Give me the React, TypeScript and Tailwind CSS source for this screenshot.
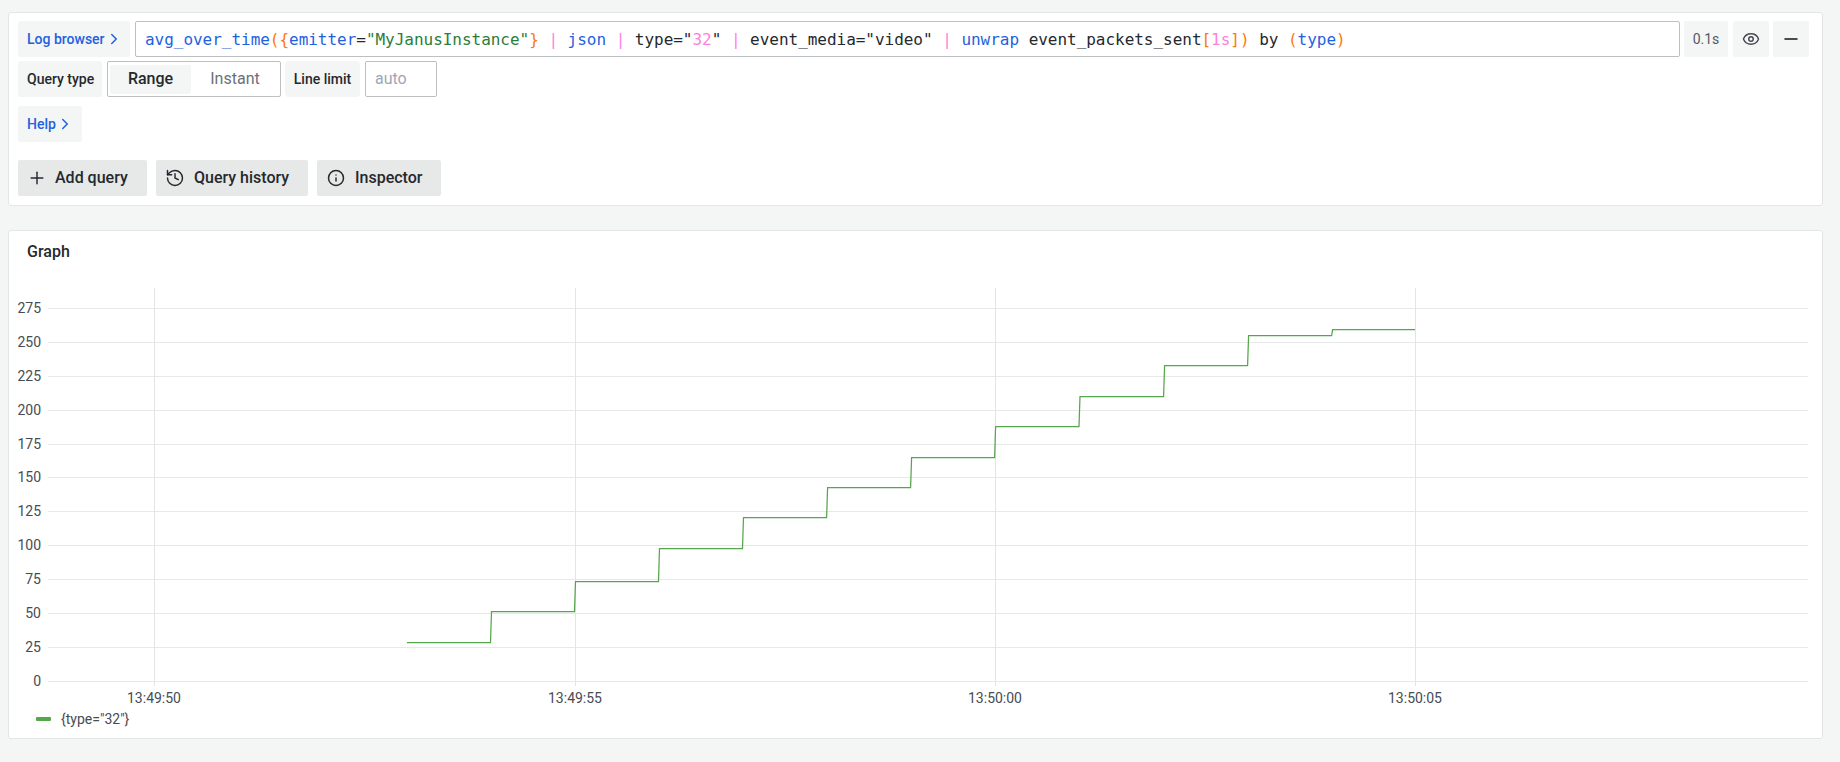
import { Eye, Minus, Plus, History, Info, ChevronRight } from "lucide-react";

const OX = 9, OY = 281;
const stepX = [407, 490.5, 574.5, 658.5, 742.5, 826.6, 910.6, 994.6, 1079, 1163.6, 1247.6, 1331.6, 1415];
const stepRow = [642, 611, 581, 548, 517, 487, 457, 426, 396, 365, 335, 329];
const gridRows: [number, number][] = [
  [0, 681], [25, 647], [50, 613], [75, 579], [100, 545], [125, 511], [150, 477],
  [175, 444], [200, 410], [225, 376], [250, 342], [275, 308],
];
const ticks: [string, number][] = [["13:49:50", 154], ["13:49:55", 575], ["13:50:00", 995], ["13:50:05", 1415]];

function Chart() {
  let d = `M ${stepX[0] - OX} ${stepRow[0] + 0.6 - OY}`;
  stepRow.forEach((r, i) => {
    const x = stepX[i + 1] - OX;
    d += ` H ${x}`;
    if (i < stepRow.length - 1) d += ` L ${x + 1} ${stepRow[i + 1] + 0.6 - OY}`;
  });
  return (
    <svg width="1812" height="428" className="block" style={{ fontFamily: "Roboto, sans-serif" }}>
      {gridRows.map(([v, r]) => (
        <g key={v}>
          <line x1="39" x2="1799" y1={r + 0.5 - OY} y2={r + 0.5 - OY} stroke="#e7e8e8" />
          <text x="32" y={r + 5 - OY} textAnchor="end" fontSize="14" fill="#464c54">{v}</text>
        </g>
      ))}
      {ticks.map(([l, x]) => (
        <g key={l}>
          <line x1={x + 0.5 - OX} x2={x + 0.5 - OX} y1={288 - OY} y2={686 - OY} stroke="#e3e4e4" />
          <text x={x - OX} y={703 - OY} textAnchor="middle" fontSize="14" fill="#464c54">{l}</text>
        </g>
      ))}
      <path d={d} fill="none" stroke="#56a64b" strokeWidth="1.25" />
    </svg>
  );
}

function Box({ className, children }: { className?: string; children: React.ReactNode }) {
  return <div className={`h-9 flex items-center bg-[#f4f5f5] rounded-[2px] text-sm font-medium ${className ?? ""}`}>{children}</div>;
}

function ActionButton({ icon, label, className }: { icon: React.ReactNode; label: string; className: string }) {
  return (
    <button className={`h-9 flex items-center bg-[#e7e8e8] rounded-[2px] text-base font-medium text-[#24292e] ${className}`}>
      {icon}
      {label}
    </button>
  );
}

const B = "text-[#1f62e0]";
const O = "text-[#ff780a]";
const G = "text-[#2a7d3c]";
const M = "text-[#ff7fe0]";
const segments: [string, string][] = [
  ["avg_over_time", B], ["(", O], ["{", O], ["emitter", B], ["=", ""], ['"MyJanusInstance"', G], ["}", O], [" ", ""],
  ["|", M], [" ", ""], ["json", B], [" ", ""], ["|", M], [' type="', ""], ["32", M], ['" ', ""], ["|", M],
  [' event_media="video" ', ""], ["|", M], [" ", ""], ["unwrap", B], [" event_packets_sent", ""], ["[", O], ["1s", M], ["]", O],
  [")", O], [" by ", ""], ["(", O], ["type", B], [")", O],
];

export default function App() {
  return (
    <div className="w-[1840px] h-[762px] bg-[#f4f5f5] overflow-hidden pt-3 pl-[8px] pr-[17px]" style={{ fontFamily: "Roboto, sans-serif" }}>
      <div className="h-[194px] bg-white border border-[#e4e6e6] rounded-[3px] pt-[8px] pl-[9px] pr-[13px]">
        <div className="flex gap-1">
          <Box className="w-[112px] pl-[9px] text-[#1f62e0]">
            Log browser
            <ChevronRight size={18} />
          </Box>
          <div
            className="flex-1 ml-[1px] h-9 border border-[#bdbfc2] rounded-[2px] flex items-center pl-[9px] pt-[2px] text-[16px] text-[#24292e] tracking-[-0.03px] whitespace-pre"
            style={{ fontFamily: '"DejaVu Sans Mono", monospace' }}
          >
            {segments.map(([t, c], i) => (
              <span key={i} className={c}>{t}</span>
            ))}
          </div>
          <Box className="w-11 justify-center text-[#525a66] font-normal">0.1s</Box>
          <Box className="w-9 ml-[1px] justify-center text-[#464c54]">
            <Eye size={18} />
          </Box>
          <Box className="w-9 justify-center text-[#464c54]">
            <Minus size={20} strokeWidth={2.25} />
          </Box>
        </div>
        <div className="flex mt-1 h-9">
          <Box className="w-[84px] pl-[9px] text-[#24292e]">Query type</Box>
          <div className="ml-[5px] w-[174px] h-9 border border-[#bdbfc2] rounded-[2px] flex items-center pl-[2px] text-base">
            <div className="w-[81px] h-[29px] bg-[#f4f5f5] rounded-[2px] flex items-center justify-center font-medium text-[#24292e]">Range</div>
            <div className="w-[88px] text-center text-[#6c7078]">Instant</div>
          </div>
          <Box className="ml-1 w-[75px] justify-center text-[#24292e] rounded-[4px]">Line limit</Box>
          <div className="ml-[5px] w-[72px] h-9 border border-[#bdbfc2] rounded-[2px] flex items-center pl-[9px] text-base text-[#9fa7b3]">auto</div>
        </div>
        <div className="mt-[9px]">
          <Box className="w-16 pl-[9px] text-[#1f62e0]">
            Help
            <ChevronRight size={18} />
          </Box>
        </div>
        <div className="flex gap-[9px] mt-[18px]">
          <ActionButton className="w-[129px] pl-[9px]" label="Add query" icon={<Plus size={20} strokeWidth={1.75} className="mr-[8px]" />} />
          <ActionButton className="w-[152px] pl-[9px]" label="Query history" icon={<History size={20} strokeWidth={1.75} className="mr-[9px]" />} />
          <ActionButton className="w-[124px] pl-[10px]" label="Inspector" icon={<Info size={18} className="mr-[10px]" />} />
        </div>
      </div>

      <div className="mt-[24px] h-[509px] bg-white border border-[#e4e6e6] rounded-[3px]">
        <div className="pl-[18px] pt-[11px] h-[50px] text-base font-medium text-[#24292e] leading-[20px]">Graph</div>
        <Chart />
        <div className="flex items-center h-5 pl-[27px] text-sm text-[#464c54]">
          <div className="w-[15px] h-1 bg-[#56a64b] rounded-[1px] mr-[10px]" />
          {'{type="32"}'}
        </div>
      </div>
    </div>
  );
}
